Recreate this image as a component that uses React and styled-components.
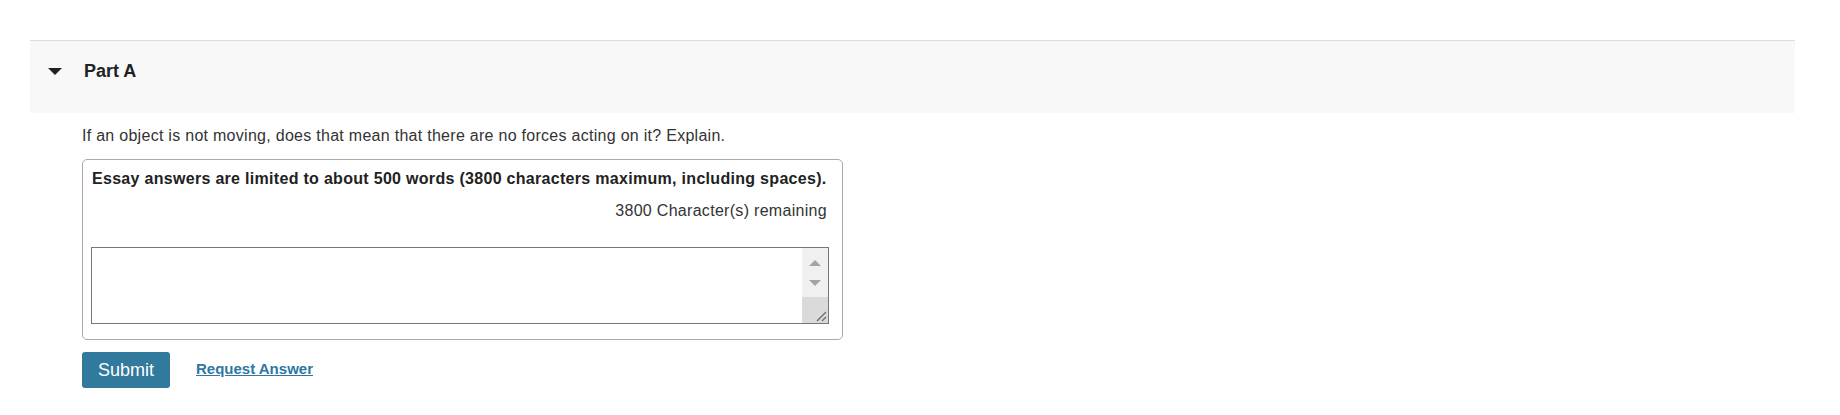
import React, {useState} from 'react';
import styled, {createGlobalStyle} from 'styled-components';

const GlobalStyle = createGlobalStyle`
  body {
    margin: 0;
    background: #ffffff;
    font-family: "Liberation Sans", Arial, sans-serif;
    color: #333333;
  }
`;

const Page = styled.div`
  padding: 40px 45px 0 30px;
`;

const PartHeader = styled.div`
  display: flex;
  align-items: center;
  gap: 22px;
  padding: 0 0 12px 18px;
  box-sizing: border-box;
  height: 73px;
  border-top: 1px solid #dddddd;
  background-color: #f8f8f8;
  cursor: pointer;
`;

const Caret = styled.span`
  width: 0;
  height: 0;
  border-left: 7px solid transparent;
  border-right: 7px solid transparent;
  border-top: 7px solid #222222;
`;

const PartTitle = styled.h2`
  margin: 0;
  font-size: 18px;
  font-weight: bold;
  line-height: 24px;
  color: #222222;
`;

const PartBody = styled.div`
  padding: 12px 0 0 52px;
`;

const Question = styled.p`
  margin: 0 0 12px;
  font-size: 16px;
  line-height: 22px;
  letter-spacing: 0.28px;
  color: #333333;
`;

const EssayBox = styled.div`
  width: 761px;
  box-sizing: border-box;
  border: 1px solid #aaaaaa;
  border-radius: 5px;
  padding: 8px 13px 15px 8px;
`;

const Limit = styled.div`
  margin-left: 1px;
  font-size: 16px;
  font-weight: bold;
  line-height: 22px;
  letter-spacing: 0.3px;
  color: #222222;
`;

const Remaining = styled.div`
  margin: 10px 2px 0 0;
  text-align: right;
  font-size: 16px;
  line-height: 22px;
  letter-spacing: 0.3px;
  color: #333333;
`;

const TextFrame = styled.div`
  display: flex;
  margin-top: 25px;
  height: 77px;
  box-sizing: border-box;
  border: 1px solid #767676;
  background: #ffffff;
`;

const Field = styled.textarea`
  flex: 1;
  border: none;
  outline: none;
  resize: none;
  padding: 4px 6px;
  font-family: "Liberation Sans", Arial, sans-serif;
  font-size: 16px;
  color: #333333;
`;

const ScrollRail = styled.div`
  display: flex;
  flex-direction: column;
  width: 26px;
  padding-top: 5px;
  background-color: #f0f0f0;
`;

const ScrollArrow = styled.div`
  display: flex;
  justify-content: center;
  align-items: center;
  height: 20px;
`;

const ArrowShape = styled.span`
  width: 0;
  height: 0;
  border-left: 6px solid transparent;
  border-right: 6px solid transparent;
  ${({down}) => (down ? 'border-top: 6px solid #a3a3a3;' : 'border-bottom: 6px solid #a3a3a3;')}
`;

const ScrollThumb = styled.div`
  flex: 1;
  margin-top: 4px;
  display: flex;
  justify-content: flex-end;
  align-items: flex-end;
  background-color: #dadada;
`;

const Actions = styled.div`
  display: flex;
  align-items: center;
  gap: 26px;
  margin-top: 12px;
`;

const SubmitButton = styled.button`
  width: 88px;
  height: 36px;
  border: none;
  border-radius: 3px;
  background-color: #31799d;
  color: #ffffff;
  font-family: "Liberation Sans", Arial, sans-serif;
  font-size: 18px;
  cursor: pointer;
`;

const RequestLink = styled.a`
  margin-bottom: 4px;
  font-size: 15px;
  font-weight: bold;
  color: #2f77a0;
  text-decoration: underline;
  cursor: pointer;
`;

const MAX_CHARS = 3800;

export default function App() {
  const [answer, setAnswer] = useState('');

  return (
    <Page>
      <GlobalStyle />
      <PartHeader>
        <Caret />
        <PartTitle>Part A</PartTitle>
      </PartHeader>
      <PartBody>
        <Question>
          If an object is not moving, does that mean that there are no forces acting on it? Explain.
        </Question>
        <EssayBox>
          <Limit>Essay answers are limited to about 500 words (3800 characters maximum, including spaces).</Limit>
          <Remaining>{MAX_CHARS - answer.length} Character(s) remaining</Remaining>
          <TextFrame>
            <Field value={answer} maxLength={MAX_CHARS} onChange={e => setAnswer(e.target.value)} />
            <ScrollRail>
              <ScrollArrow><ArrowShape /></ScrollArrow>
              <ScrollArrow><ArrowShape down /></ScrollArrow>
              <ScrollThumb>
                <svg width="14" height="14" viewBox="0 0 14 14">
                  <path d="M12 3 L3 12 M12 8 L8 12" stroke="#666" strokeWidth="1.2" fill="none" />
                </svg>
              </ScrollThumb>
            </ScrollRail>
          </TextFrame>
        </EssayBox>
        <Actions>
          <SubmitButton>Submit</SubmitButton>
          <RequestLink>Request Answer</RequestLink>
        </Actions>
      </PartBody>
    </Page>
  );
}
